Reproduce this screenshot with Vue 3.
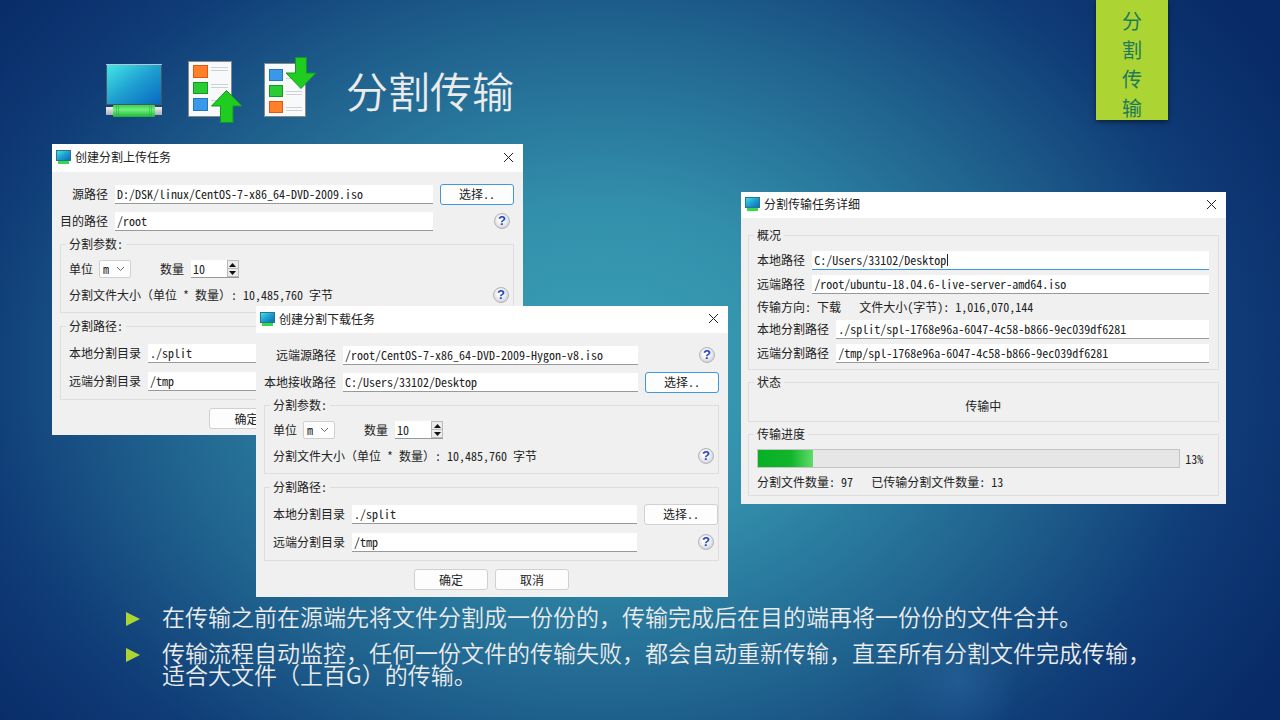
<script setup>
import { ref } from 'vue'

const tasks = ref([
  {
    id: 'upload',
    title: '创建分割上传任务',
    paths: [
      { label: '源路径', value: 'D:/DSK/linux/CentOS-7-x86_64-DVD-2009.iso', pick: true },
      { label: '目的路径', value: '/root', pick: false }
    ],
    unit: 'm',
    count: 10,
    local: './split',
    remote: '/tmp'
  },
  {
    id: 'download',
    title: '创建分割下载任务',
    paths: [
      { label: '远端源路径', value: '/root/CentOS-7-x86_64-DVD-2009-Hygon-v8.iso', pick: false },
      { label: '本地接收路径', value: 'C:/Users/33102/Desktop', pick: true }
    ],
    unit: 'm',
    count: 10,
    local: './split',
    remote: '/tmp'
  }
])

const detail = ref({
  local: 'C:/Users/33102/Desktop',
  remote: '/root/ubuntu-18.04.6-live-server-amd64.iso',
  localSplit: './split/spl-1768e96a-6047-4c58-b866-9ec039df6281',
  remoteSplit: '/tmp/spl-1768e96a-6047-4c58-b866-9ec039df6281',
  percent: 13
})

const notes = [
  '在传输之前在源端先将文件分割成一份份的，传输完成后在目的端再将一份份的文件合并。',
  '传输流程自动监控，任何一份文件的传输失败，都会自动重新传输，直至所有分割文件完成传输，适合大文件（上百G）的传输。'
]
</script>

<template>
  <main class="slide">
    <aside class="tag">分割传输</aside>

    <header class="head">
      <svg class="pic" width="62" height="70" viewBox="0 0 62 70" aria-hidden="true">
        <defs>
          <linearGradient id="screen" x1="0" y1="0" x2="1" y2="1">
            <stop offset="0" stop-color="#42e8e8" />
            <stop offset="0.5" stop-color="#1f9fd0" />
            <stop offset="1" stop-color="#0668c0" />
          </linearGradient>
          <linearGradient id="tube" x1="0" y1="0" x2="0" y2="1">
            <stop offset="0" stop-color="#36d14e" />
            <stop offset="0.4" stop-color="#6ff07c" />
            <stop offset="1" stop-color="#1fb338" />
          </linearGradient>
          <linearGradient id="cap" x1="0" y1="0" x2="0" y2="1">
            <stop offset="0" stop-color="#f0f0f0" />
            <stop offset="1" stop-color="#a8adb2" />
          </linearGradient>
        </defs>
        <rect x="0.5" y="7.5" width="55" height="40" fill="url(#screen)" stroke="#4a5560" />
        <path d="M0 7.5H56" stroke="#b9c4cb" />
        <rect x="0" y="50" width="56" height="8" fill="url(#cap)" />
        <rect x="7" y="48" width="42" height="12" rx="1" fill="url(#tube)" />
        <path d="M10.500 49V60M12.500 49V60M43.500 49V60M45.500 49V60" stroke="#2cab41" stroke-opacity="0.5" />
      </svg>
      <svg class="pic" width="56" height="70" viewBox="0 0 56 70" aria-hidden="true">
        <rect x="0.500" y="4.500" width="43" height="55" fill="#f8f9fb" stroke="#888" />
        <rect x="5.500" y="8.500" width="14" height="12" fill="#ff802b" stroke="#e8560d" />
        <rect x="5.500" y="25.500" width="14" height="11" fill="#2bcb35" stroke="#139b20" />
        <rect x="5.500" y="41.500" width="14" height="12" fill="#3a98e8" stroke="#2375c2" />
        <path d="M23 10.500H40M23 13.500H40M23 27.500H40M23 30.500H40M23 43.500H40" stroke="#cfd0d4" />
        <path d="M38.500 33.500L54 49H45V65.500H32.500V49H23.500Z" fill="#20cc20" stroke="#11962a" />
      </svg>
      <svg class="pic" width="54" height="70" viewBox="0 0 54 70" aria-hidden="true">
        <rect x="0.500" y="6.500" width="41" height="53" fill="#f8f9fb" stroke="#888" />
        <rect x="5.500" y="12.500" width="13" height="11" fill="#3a98e8" stroke="#2375c2" />
        <rect x="5.500" y="28.500" width="13" height="11" fill="#2bcb35" stroke="#139b20" />
        <rect x="5.500" y="44.500" width="13" height="11" fill="#ff802b" stroke="#e8560d" />
        <path d="M22 21.500H38M22 34.500H38M22 37.500H38M22 50.500H38M22 53.500H38" stroke="#cfd0d4" />
        <path d="M31.500 0.500H42.500V16H52L37 31.500L22 16H31.500Z" fill="#20cc20" stroke="#11962a" />
      </svg>
      <h1>分割传输</h1>
    </header>

    <section class="stage">
      <form v-for="t in tasks" :key="t.id" class="win" :class="t.id" @submit.prevent>
        <div class="bar">
          <svg width="16" height="14" viewBox="0 0 16 14" aria-hidden="true">
            <rect x="0.500" y="0.500" width="14" height="10" fill="url(#screen)" stroke="#2b7390" />
            <rect x="2" y="11" width="11" height="3" fill="#35d94a" />
          </svg>
          <h2>{{ t.title }}</h2>
          <button type="button" class="close" aria-label="关闭">
            <svg width="11" height="11" viewBox="0 0 11 11"><path d="M1 1L10 10M10 1L1 10" stroke="#222" stroke-width="1" /></svg>
          </button>
        </div>
        <div class="body">
          <div class="paths">
            <template v-for="(p, i) in t.paths" :key="i">
              <label :for="t.id + '-p' + i">{{ p.label }}</label>
              <input :id="t.id + '-p' + i" v-model="p.value" class="line" type="text" />
              <button v-if="p.pick" type="button" class="btn active">选择..</button>
              <button v-else type="button" class="help" aria-label="帮助">?</button>
            </template>
          </div>
          <fieldset class="params">
            <legend>分割参数:</legend>
            <div class="row">
              <label :for="t.id + '-unit'">单位</label>
              <span class="combo">
                <select :id="t.id + '-unit'" v-model="t.unit"><option>m</option><option>k</option></select>
                <svg width="9" height="6" viewBox="0 0 9 6" aria-hidden="true"><path d="M1 1L4.500 4.500L8 1" fill="none" stroke="#666" /></svg>
              </span>
              <label class="amount" :for="t.id + '-count'">数量</label>
              <span class="spin">
                <input :id="t.id + '-count'" v-model="t.count" type="number" />
                <span class="steps">
                  <button type="button" aria-label="增加" @click="t.count++"><svg width="7" height="4" viewBox="0 0 7 4"><path d="M0 4L3.500 0L7 4Z" fill="#111" /></svg></button>
                  <button type="button" aria-label="减少" @click="t.count--"><svg width="7" height="4" viewBox="0 0 7 4"><path d="M0 0L3.500 4L7 0Z" fill="#111" /></svg></button>
                </span>
              </span>
            </div>
            <div class="row">
              <span>分割文件大小（单位 * 数量）: 10,485,760 字节</span>
              <button type="button" class="help" aria-label="帮助">?</button>
            </div>
          </fieldset>
          <fieldset class="dirs">
            <legend>分割路径:</legend>
            <div class="paths">
              <label :for="t.id + '-local'">本地分割目录</label>
              <input :id="t.id + '-local'" v-model="t.local" class="line" type="text" />
              <button type="button" class="btn">选择..</button>
              <label :for="t.id + '-remote'">远端分割目录</label>
              <input :id="t.id + '-remote'" v-model="t.remote" class="line" type="text" />
              <button type="button" class="help" aria-label="帮助">?</button>
            </div>
          </fieldset>
          <div class="actions">
            <button type="submit" class="btn">确定</button>
            <button type="button" class="btn">取消</button>
          </div>
        </div>
      </form>

      <section class="win detail">
        <div class="bar">
          <svg width="16" height="14" viewBox="0 0 16 14" aria-hidden="true">
            <rect x="0.500" y="0.500" width="14" height="10" fill="url(#screen)" stroke="#2b7390" />
            <rect x="2" y="11" width="11" height="3" fill="#35d94a" />
          </svg>
          <h2>分割传输任务详细</h2>
          <button type="button" class="close" aria-label="关闭">
            <svg width="11" height="11" viewBox="0 0 11 11"><path d="M1 1L10 10M10 1L1 10" stroke="#222" stroke-width="1" /></svg>
          </button>
        </div>
        <div class="body">
          <fieldset class="info">
            <legend>概况</legend>
            <div class="row">
              <label for="d-local">本地路径</label>
              <span class="focus"><input id="d-local" v-model="detail.local" type="text" /><i class="caret"></i></span>
            </div>
            <div class="row">
              <label for="d-remote">远端路径</label>
              <input id="d-remote" v-model="detail.remote" class="line" type="text" />
            </div>
            <p class="facts"><span>传输方向: 下载</span><span>文件大小(字节): 1,016,070,144</span></p>
            <div class="row">
              <label for="d-ls">本地分割路径</label>
              <input id="d-ls" v-model="detail.localSplit" class="line" type="text" />
            </div>
            <div class="row">
              <label for="d-rs">远端分割路径</label>
              <input id="d-rs" v-model="detail.remoteSplit" class="line" type="text" />
            </div>
          </fieldset>
          <fieldset class="state">
            <legend>状态</legend>
            <p>传输中</p>
          </fieldset>
          <fieldset class="progress">
            <legend>传输进度</legend>
            <div class="meter">
              <div class="track" role="progressbar" aria-label="传输进度" :aria-valuenow="detail.percent">
                <div class="fill" :style="{ width: detail.percent + '%' }"></div>
              </div>
              <span>{{ detail.percent }}%</span>
            </div>
            <p class="facts"><span>分割文件数量: 97</span><span>已传输分割文件数量: 13</span></p>
          </fieldset>
        </div>
      </section>
    </section>

    <ul class="notes">
      <li v-for="n in notes" :key="n">
        <svg width="14" height="14" viewBox="0 0 14 14" aria-hidden="true"><path d="M0 0L14 7L0 14Z" fill="#acd433" /></svg>
        <span>{{ n }}</span>
      </li>
    </ul>
  </main>
</template>

<style>
body {
  margin: 0;
}
</style>

<style scoped>
* {
  box-sizing: border-box;
}
.slide {
  position: relative;
  min-height: 100vh;
  padding-top: 57px;
  color: #ebebeb;
  font-family: "Noto Sans CJK SC", sans-serif;
  background:
    radial-gradient(circle at 75% 95%, rgba(60, 130, 190, 0.25), transparent 60px),
    radial-gradient(ellipse 56% 76% at 47% 51%, #3ba0b6 0%, #328fab 30%, #20638f 62%, #0f3b76 88%, #082a66 110%);
}
.tag {
  position: absolute;
  top: 0;
  right: 112px;
  width: 72px;
  height: 120px;
  padding: 6px 26px 0;
  color: #1f7a5c;
  background: #acd433;
  box-shadow: 0 2px 5px rgba(0, 0, 0, 0.5);
  font-size: 20px;
  line-height: 29px;
}
.head {
  display: flex;
  align-items: center;
  gap: 20px;
  padding-left: 106px;
}
.pic {
  flex: none;
}
h1 {
  margin: 0 0 0 8px;
  padding-bottom: 4px;
  font-size: 42px;
  font-weight: 350;
  line-height: 66px;
}
.stage {
  position: relative;
  height: 453px;
  margin-top: 17px;
}
.win {
  position: absolute;
  color: #222;
  background: #f0f0f0;
  font-family: "Noto Sans Mono CJK SC", "Noto Sans CJK SC", monospace;
  font-size: 12px;
  line-height: 18px;
}
.upload {
  top: 0;
  left: 4.06%;
  width: 36.8%;
}
.download {
  top: 162px;
  left: 20%;
  width: 36.88%;
}
.detail {
  top: 48px;
  left: 57.9%;
  width: 37.9%;
}
.bar {
  display: flex;
  align-items: center;
  gap: 3px;
  height: 27px;
  padding: 0 9px 2px 4px;
  background: #fff;
}
.upload .bar {
  height: 28px;
}
.detail .bar {
  height: 26px;
}
h2 {
  flex: 1;
  margin: 0;
  font-size: 12px;
  font-weight: 400;
}
button,
input,
select {
  margin: 0;
  padding: 0;
  border: 0;
  color: #222;
  font: inherit;
}
.close {
  display: flex;
  background: none;
}
.body {
  padding: 11px 9px 7px 8px;
}
.upload .body {
  padding-bottom: 6px;
}
.paths {
  display: grid;
  grid-template-columns: max-content 1fr 74px;
  grid-auto-rows: 22px;
  gap: 5px 7px;
  align-items: center;
}
.paths > label {
  text-align: right;
}
.line {
  width: 100%;
  min-width: 0;
  height: 19px;
  padding: 0 2px;
  background: #fff;
  border-bottom: 1px solid #999;
}
.btn {
  width: 74px;
  height: 21px;
  background: #fdfdfd;
  border: 1px solid #d0d0d0;
  border-radius: 3px;
}
.btn.active {
  border-color: #3f97dd;
}
.help {
  width: 16px;
  height: 16px;
  margin: 0 4px 0 0;
  justify-self: end;
  color: #2146c7;
  background: radial-gradient(circle at 45% 40%, #fff 20%, #d9d9dd 70%, #a5a5a8 100%);
  border: 1px solid #b4b4b8;
  border-radius: 50%;
  font-family: "Liberation Sans", sans-serif;
  font-size: 13px;
  font-weight: 700;
  line-height: 14px;
  text-align: center;
}
fieldset {
  min-width: 0;
  margin: 5px 0 0;
  padding: 8px 0 8px 8px;
  border: 1px solid #dedede;
}
legend {
  margin-left: -3px;
  padding: 0 3px;
  line-height: 16px;
}
.body > .paths + fieldset {
  margin-top: 4px;
}
.row {
  display: flex;
  align-items: center;
  height: 18px;
}
.params .row + .row {
  justify-content: space-between;
  margin-top: 8px;
}
.combo {
  display: flex;
  align-items: center;
  width: 32px;
  height: 18px;
  margin-left: 6px;
  padding-right: 5px;
  background: #fdfdfd;
  border: 1px solid #d0d0d0;
  border-radius: 2px;
}
.combo select {
  flex: 1;
  min-width: 0;
  padding-left: 3px;
  appearance: none;
  background: none;
}
.amount {
  margin-left: 29px;
}
.spin {
  display: flex;
  width: 48px;
  height: 18px;
  margin-left: 7px;
  background: #fff;
  border-bottom: 1px solid #999;
}
.spin input {
  flex: 1;
  min-width: 0;
  padding-left: 2px;
  appearance: textfield;
  background: none;
}
.spin input::-webkit-inner-spin-button {
  display: none;
}
.steps {
  display: grid;
  width: 12px;
  border: 1px solid #bbb;
  background: #ececec;
}
.steps button {
  display: grid;
  place-items: center;
  background: none;
}
.steps button + button {
  border-top: 1px solid #bbb;
}
.dirs .paths {
  row-gap: 6px;
}
.dirs {
  padding-bottom: 7px;
}
.actions {
  display: flex;
  justify-content: center;
  gap: 7px;
  margin-top: 8px;
}
.detail .body {
  padding: 9px 7px 8px;
}
.detail fieldset {
  margin-top: 4px;
  padding: 7px 9px 6px 8px;
}
.detail fieldset.info {
  display: grid;
  row-gap: 6px;
  margin-top: 0;
  padding: 8px 9px 7px 8px;
}
.info .row {
  gap: 7px;
}
.info label {
  flex: none;
}
.focus {
  position: relative;
  flex: 1;
  height: 19px;
  background: #fff;
  border-bottom: 1px solid #3f97dd;
}
.focus input {
  width: 100%;
  height: 18px;
  padding: 0 2px;
  background: none;
}
.caret {
  position: absolute;
  top: 3px;
  left: 135px;
  width: 1px;
  height: 12px;
  background: #222;
}
p {
  margin: 0;
}
.facts {
  display: flex;
  gap: 18px;
  line-height: 15px;
}
.state p {
  text-align: center;
}
.progress .facts {
  margin-top: 6px;
}
.meter {
  display: flex;
  align-items: center;
  gap: 5px;
  padding-right: 6px;
}
.track {
  flex: 1;
  height: 19px;
  background: #e6e6e6;
  border: 1px solid #c4c4c4;
}
.fill {
  height: 100%;
  background: linear-gradient(90deg, #06b025 0%, #12b52c 60%, #5fdc69 100%);
}
.notes {
  display: grid;
  gap: 14px;
  margin: 8px 0 0;
  padding: 0 118px 35px 126px;
  list-style: none;
  font-size: 23px;
  font-weight: 350;
  line-height: 22px;
}
.notes li {
  display: flex;
  gap: 22px;
}
.notes svg {
  flex: none;
  margin-top: 7px;
}
</style>
